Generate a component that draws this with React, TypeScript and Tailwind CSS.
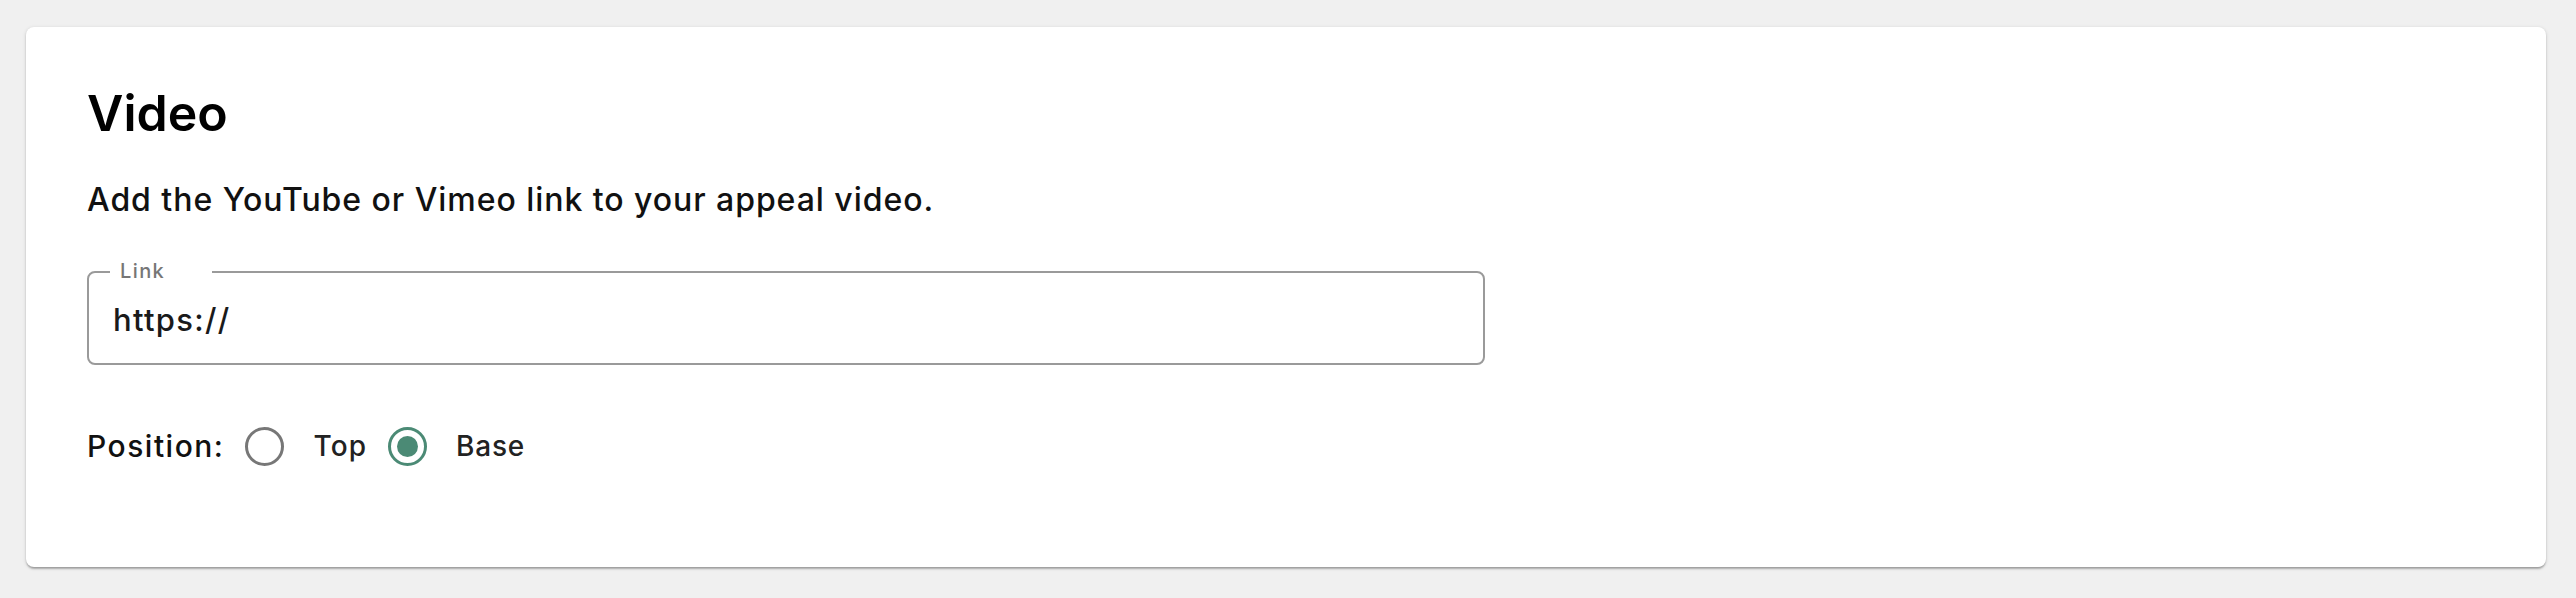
import { useState } from 'react';

type Position = 'top' | 'base';

function Radio({ checked, onChange }: { checked: boolean; onChange: () => void }) {
  return (
    <button
      type="button"
      onClick={onChange}
      className={`flex items-center justify-center w-[39px] h-[39px] rounded-full border-[3.5px] shrink-0 ${
        checked ? 'border-[#4b8a75]' : 'border-[#777777]'
      }`}
    >
      {checked && <span className="block w-[21px] h-[21px] rounded-full bg-[#4b8a75]" />}
    </button>
  );
}

export default function App() {
  const [link, setLink] = useState('https://');
  const [position, setPosition] = useState<Position>('base');

  return (
    <div className="min-h-[598px] bg-[#f0f0f0] pt-[27px] pl-[26px] pr-[30px] font-['Inter',sans-serif]">
      {/* Card */}
      <div className="h-[540px] bg-white rounded-[8px] shadow-[0_3px_2px_-1px_rgba(0,0,0,0.2),0_1px_2px_0_rgba(0,0,0,0.14),0_1px_4px_0_rgba(0,0,0,0.12)] pt-[56px] px-[61px]">
        <h2 className="text-[50px] leading-[60px] font-semibold text-black">Video</h2>

        <p className="mt-[37px] text-[32px] leading-[40px] font-medium tracking-[0.95px] text-[#111111]">
          Add the YouTube or Vimeo link to your appeal video.
        </p>

        {/* Outlined text field */}
        <div className="relative mt-[51px] w-[1398px] h-[94px] rounded-[8px] border-2 border-[#9a9a9a]">
          <span className="absolute -top-[15px] left-[21px] w-[102px] pl-[10px] bg-white text-[20px] leading-[26px] font-medium tracking-[1.4px] text-[#767676]">
            Link
          </span>
          <input
            value={link}
            onChange={e => setLink(e.target.value)}
            className="w-full h-full bg-transparent px-[24px] pt-[2px] text-[31px] font-medium tracking-[1.3px] text-[#1a1a1a] outline-none"
          />
        </div>

        {/* Position */}
        <div className="mt-[61px] flex items-center h-[40px]">
          <span className="text-[30px] font-medium tracking-[1.5px] text-[#111111] mr-[21px]">Position:</span>
          <Radio checked={position === 'top'} onChange={() => setPosition('top')} />
          <span className="ml-[29px] mr-[21px] text-[28px] font-medium tracking-[1.1px] text-[#222222]">Top</span>
          <Radio checked={position === 'base'} onChange={() => setPosition('base')} />
          <span className="ml-[29px] text-[28px] font-medium tracking-[0.8px] text-[#222222]">Base</span>
        </div>
      </div>
    </div>
  );
}
